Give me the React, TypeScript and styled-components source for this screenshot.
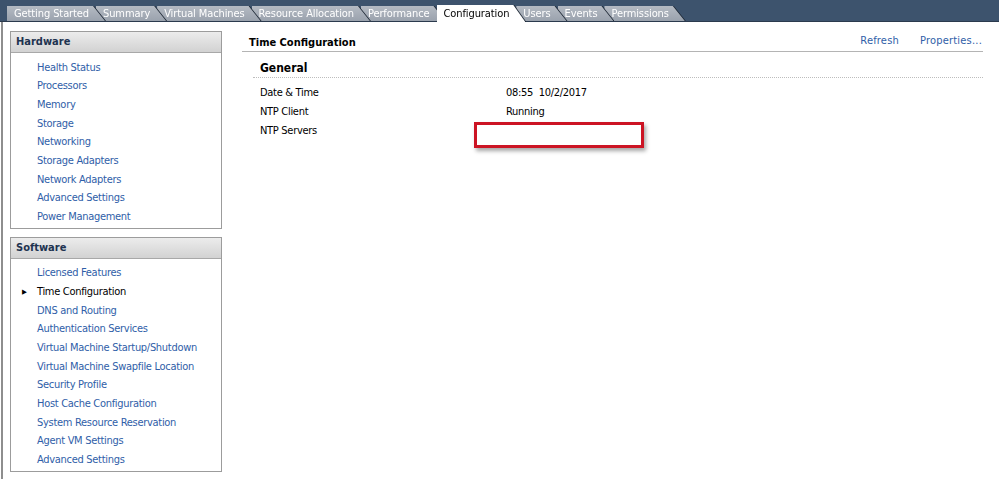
import React, { FC } from 'react';
import styled, { createGlobalStyle } from 'styled-components';

const GlobalStyle = createGlobalStyle`
  html, body {
    margin: 0;
    padding: 0;
    background: #ffffff;
  }
  body {
    font-family: 'DejaVu Sans Condensed', 'Liberation Sans', sans-serif;
    font-size: 11px;
    letter-spacing: -0.3px;
    color: #000000;
  }
`;

const Page = styled.div`
  width: 999px;
  height: 479px;
  overflow: hidden;
  display: flex;
  flex-direction: column;
`;

const TabBar = styled.div`
  height: 22px;
  flex: none;
  background: #3d536d;
  display: flex;
  align-items: flex-end;
  padding-left: 7px;
  box-sizing: border-box;
  border-bottom: 1px solid #2b3a4d;
`;

const TabWrap = styled.div<{ $active?: boolean; $z: number }>`
  position: relative;
  z-index: ${({ $active, $z }) => ($active ? 50 : $z)};
  margin-right: -9px;
  margin-bottom: ${({ $active }) => ($active ? '-1px' : '0')};
  filter: drop-shadow(1px 0 0 #1c2633);
`;

const TabFace = styled.div<{ $active?: boolean }>`
  height: ${({ $active }) => ($active ? '17px' : '15px')};
  line-height: ${({ $active }) => ($active ? '17px' : '15px')};
  padding: 0 16px 0 7px;
  color: ${({ $active }) => ($active ? '#000000' : '#ffffff')};
  background: ${({ $active }) =>
    $active ? '#ffffff' : 'linear-gradient(#b4bac3, #9aa2ad)'};
  clip-path: polygon(0 0, calc(100% - 12px) 0, 100% 100%, 0 100%);
  white-space: nowrap;
  font-size: 11px;
  letter-spacing: -0.1px;
`;

const Body = styled.div`
  flex: 1;
  display: flex;
  margin-left: 1px;
  border-left: 2px solid #8e8e8e;
  padding: 9px 16px 0 7px;
`;

const Sidebar = styled.div`
  width: 212px;
  flex: none;
  display: flex;
  flex-direction: column;
  gap: 8px;
`;

const Panel = styled.div`
  border: 1px solid #9c9c9c;
  background: #ffffff;
`;

const PanelHeader = styled.div`
  height: 20px;
  line-height: 20px;
  padding-left: 5px;
  font-weight: bold;
  font-size: 11px;
  letter-spacing: 0;
  color: #1e3350;
  background: linear-gradient(#ececec, #d2d2d2);
  border-bottom: 1px solid #a8a8a8;
`;

const PanelList = styled.div`
  padding: 5.5px 0 1px;
`;

const NavItem = styled.div<{ $current?: boolean }>`
  position: relative;
  height: 18.7px;
  line-height: 18.7px;
  padding-left: 26px;
  color: ${({ $current }) => ($current ? '#000000' : '#2f5ea8')};
  white-space: nowrap;
`;

const Arrow = styled.span`
  position: absolute;
  left: 11px;
  top: 0;
  font-size: 7px;
  color: #000000;
`;

const Content = styled.div`
  flex: 1;
  margin-left: 20px;
  display: flex;
  flex-direction: column;
`;

const TitleRow = styled.div`
  height: 17px;
  margin-top: 3px;
  display: flex;
  align-items: center;
  justify-content: space-between;
  border-bottom: 1px solid #b4b4b4;
  padding: 0 1px 0 7px;
`;

const Title = styled.div`
  font-weight: bold;
  letter-spacing: 0;
`;

const Actions = styled.div`
  display: flex;
  gap: 21px;
  margin-top: -4px;
`;

const Action = styled.span`
  color: #2f5ea8;
  letter-spacing: 0.2px;
`;

const Section = styled.div`
  margin-left: 11px;
  margin-top: 6px;
`;

const SectionHeader = styled.div`
  height: 17px;
  line-height: 17px;
  padding: 2px 0 0 7px;
  font-weight: bold;
  font-size: 12px;
  letter-spacing: 0;
  border-bottom: 1px dotted #bdbdbd;
`;

const Rows = styled.div`
  padding-top: 5px;
`;

const Row = styled.div`
  display: flex;
  height: 19px;
  line-height: 19px;
  padding-left: 7px;
`;

const Label = styled.div`
  width: 246px;
  flex: none;
`;

const Value = styled.div`
  position: relative;
  flex: 1;
`;

const Highlight = styled.div`
  position: absolute;
  left: -32px;
  top: 1px;
  width: 164px;
  height: 20px;
  border: 3px solid #cc1424;
  background: #ffffff;
  box-shadow: 2px 3px 4px rgba(0, 0, 0, 0.35);
`;

const tabs = [
  'Getting Started',
  'Summary',
  'Virtual Machines',
  'Resource Allocation',
  'Performance',
  'Configuration',
  'Users',
  'Events',
  'Permissions',
];

const hardware = [
  'Health Status',
  'Processors',
  'Memory',
  'Storage',
  'Networking',
  'Storage Adapters',
  'Network Adapters',
  'Advanced Settings',
  'Power Management',
];

const software = [
  'Licensed Features',
  'Time Configuration',
  'DNS and Routing',
  'Authentication Services',
  'Virtual Machine Startup/Shutdown',
  'Virtual Machine Swapfile Location',
  'Security Profile',
  'Host Cache Configuration',
  'System Resource Reservation',
  'Agent VM Settings',
  'Advanced Settings',
];

const App: FC = () => (
  <Page>
    <GlobalStyle />
    <TabBar>
      {tabs.map((t, i) => (
        <TabWrap key={t} $active={t === 'Configuration'} $z={tabs.length - i}>
          <TabFace $active={t === 'Configuration'}>{t}</TabFace>
        </TabWrap>
      ))}
    </TabBar>
    <Body>
      <Sidebar>
        <Panel>
          <PanelHeader>Hardware</PanelHeader>
          <PanelList>
            {hardware.map((h) => (
              <NavItem key={h}>{h}</NavItem>
            ))}
          </PanelList>
        </Panel>
        <Panel>
          <PanelHeader>Software</PanelHeader>
          <PanelList>
            {software.map((s) => (
              <NavItem key={s} $current={s === 'Time Configuration'}>
                {s === 'Time Configuration' && <Arrow>▶</Arrow>}
                {s}
              </NavItem>
            ))}
          </PanelList>
        </Panel>
      </Sidebar>
      <Content>
        <TitleRow>
          <Title>Time Configuration</Title>
          <Actions>
            <Action>Refresh</Action>
            <Action>Properties...</Action>
          </Actions>
        </TitleRow>
        <Section>
          <SectionHeader>General</SectionHeader>
          <Rows>
            <Row>
              <Label>Date &amp; Time</Label>
              <Value>08:55&nbsp;&nbsp;10/2/2017</Value>
            </Row>
            <Row>
              <Label>NTP Client</Label>
              <Value>Running</Value>
            </Row>
            <Row>
              <Label>NTP Servers</Label>
              <Value>
                <Highlight />
              </Value>
            </Row>
          </Rows>
        </Section>
      </Content>
    </Body>
  </Page>
);

export default App;
